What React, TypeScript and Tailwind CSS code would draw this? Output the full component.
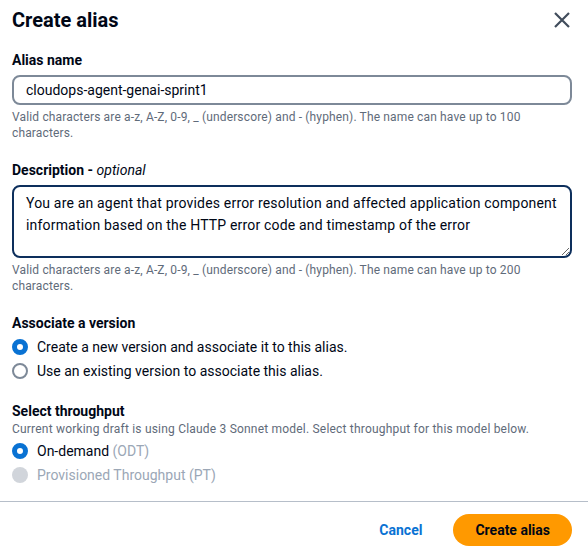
import React, { useState } from 'react';

type RadioProps = {
  checked?: boolean;
  disabled?: boolean;
  label: React.ReactNode;
  onClick?: () => void;
};

const Radio: React.FC<RadioProps> = ({ checked, disabled, label, onClick }) => (
  <button
    type="button"
    onClick={onClick}
    disabled={disabled}
    className="flex items-center gap-[9px] h-6 text-left"
  >
    {disabled ? (
      <span className="w-4 h-4 rounded-full bg-[#d1d5db] shrink-0" />
    ) : checked ? (
      <span className="w-4 h-4 rounded-full border-[5px] border-[#0972d3] bg-white shrink-0" />
    ) : (
      <span className="w-4 h-4 rounded-full border-2 border-[#7d8998] bg-white shrink-0" />
    )}
    <span className={disabled ? 'text-[#9ba7b6]' : 'text-[#000716]'}>{label}</span>
  </button>
);

const App: React.FC = () => {
  const [version, setVersion] = useState<'new' | 'existing'>('new');
  const [name, setName] = useState('cloudops-agent-genai-sprint1');
  const [desc, setDesc] = useState(
    'You are an agent that provides error resolution and affected application component information based on the HTTP error code and timestamp of the error'
  );

  return (
    <div className="w-[588px] h-[552px] bg-white text-[#000716] text-[14px] font-['Roboto','Open_Sans',sans-serif] flex flex-col overflow-hidden">
      <div className="flex-1 pl-3 pr-4">
        {/* Header */}
        <div className="flex items-center justify-between h-[38px] pt-[2px]">
          <h1 className="text-[20px] font-bold leading-6">Create alias</h1>
          <button type="button" className="w-6 h-6 flex items-center justify-center text-[#414d5c] mr-[-2px]">
            <svg width="18" height="18" viewBox="0 0 18 18" fill="none">
              <path d="M2 2L16 16M16 2L2 16" stroke="currentColor" strokeWidth="2.2" />
            </svg>
          </button>
        </div>

        {/* Alias name */}
        <div className="mt-[12px]">
          <label className="block font-bold leading-[20px]">Alias name</label>
          <input
            value={name}
            onChange={(e) => setName(e.target.value)}
            className="mt-[5px] w-full h-[30px] px-3 rounded-lg border-2 border-[#7d8998] outline-none leading-5"
          />
          <p className="mt-[4px] text-[12px] leading-4 tracking-[0.15px] text-[#5f6b7a]">
            Valid characters are a-z, A-Z, 0-9, _ (underscore) and - (hyphen). The name can have up to 100 characters.
          </p>
        </div>

        {/* Description */}
        <div className="mt-[19px]">
          <label className="block font-bold leading-[20px]">
            Description - <i className="font-normal italic">optional</i>
          </label>
          <textarea
            value={desc}
            onChange={(e) => setDesc(e.target.value)}
            className="mt-[5px] block w-full h-[73px] px-3 py-[5px] rounded-lg border-2 border-[#0d2f5c] outline-none tracking-[0.18px] leading-[22px] resize-y"
          />
          <p className="mt-[4px] text-[12px] leading-4 tracking-[0.15px] text-[#5f6b7a]">
            Valid characters are a-z, A-Z, 0-9, _ (underscore) and - (hyphen). The name can have up to 200 characters.
          </p>
        </div>

        {/* Associate a version */}
        <div className="mt-[19px]">
          <div className="font-bold leading-[20px]">Associate a version</div>
          <div className="mt-[2px] flex flex-col">
            <Radio
              checked={version === 'new'}
              onClick={() => setVersion('new')}
              label="Create a new version and associate it to this alias."
            />
            <Radio
              checked={version === 'existing'}
              onClick={() => setVersion('existing')}
              label="Use an existing version to associate this alias."
            />
          </div>
        </div>

        {/* Select throughput */}
        <div className="mt-[18px]">
          <div className="font-bold leading-[20px]">Select throughput</div>
          <p className="text-[12px] leading-4 tracking-[0.2px] text-[#5f6b7a]">
            Current working draft is using Claude 3 Sonnet model. Select throughput for this model below.
          </p>
          <div className="mt-[2px] flex flex-col">
            <Radio
              checked
              label={
                <>
                  On-demand <span className="text-[#9ba7b6]">(ODT)</span>
                </>
              }
            />
            <Radio disabled label="Provisioned Throughput (PT)" />
          </div>
        </div>
      </div>

      {/* Footer */}
      <div className="border-t border-[#b6bec9] h-[51px] flex items-start justify-end gap-[31px] pr-4 pt-[12px]">
        <button type="button" className="h-8 font-bold text-[#0972d3]">Cancel</button>
        <button
          type="button"
          className="h-8 px-[22px] rounded-full bg-[#ff9900] font-bold text-[#000716]"
        >
          Create alias
        </button>
      </div>
    </div>
  );
};

export default App;
